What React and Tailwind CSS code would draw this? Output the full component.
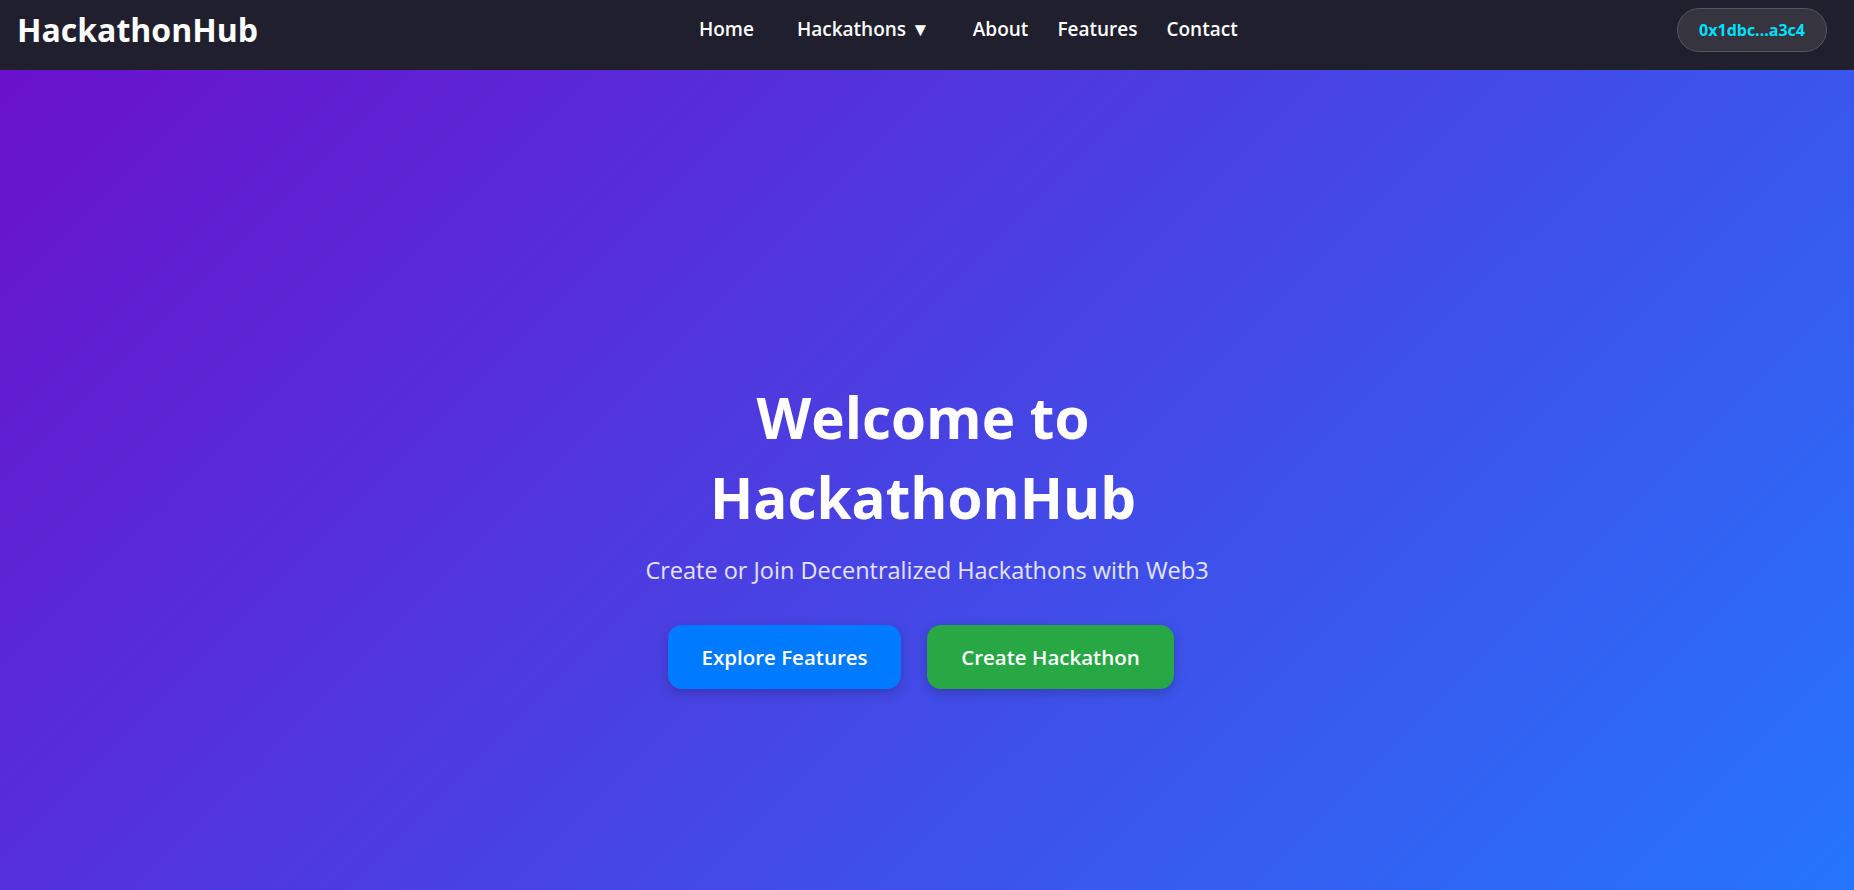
export default function App() {
  return (
    <div className="min-h-screen flex flex-col font-['Open_Sans',sans-serif]">
      {/* Top navigation */}
      <nav className="h-[70px] bg-[#1f1f2e] flex items-center pl-[17px] pr-[27px] pb-[11px] text-white">
        <a href="#" className="text-[32px] font-bold leading-none">
          HackathonHub
        </a>
        <ul className="flex items-center gap-[29px] text-[19px] font-semibold ml-[441px]">
          <li><a href="#">Home</a></li>
          <li className="px-[14px]">
            <button className="font-semibold">Hackathons ▼</button>
          </li>
          <li><a href="#">About</a></li>
          <li><a href="#">Features</a></li>
          <li><a href="#">Contact</a></li>
        </ul>
        <button className="ml-auto h-[44px] px-[21px] rounded-full bg-[#35343f] border border-[#55545f] text-[#00e1ff] text-[16px] font-bold">
          0x1dbc...a3c4
        </button>
      </nav>

      {/* Hero */}
      <section className="flex-1 min-h-[820px] bg-[linear-gradient(135deg,#6a11cb,#2575fc)] flex flex-col items-center pt-[308px] text-white text-center">
        <h1 className="max-w-[600px] mr-[8px] text-[56.6px] leading-[80px] font-bold">
          Welcome to HackathonHub
        </h1>
        <p className="mt-[16px] text-[23.5px] leading-[32px] text-white/85">
          Create or Join Decentralized Hackathons with Web3
        </p>
        <div className="mt-[39px] mr-[12px] flex gap-[26px]">
          <button className="h-[64px] w-[233px] rounded-[14px] bg-[#007bff] text-[20.5px] font-semibold shadow-[0_4px_12px_rgba(0,0,0,0.2)]">
            Explore Features
          </button>
          <button className="h-[64px] w-[247px] rounded-[14px] bg-[#28a745] text-[20.5px] font-semibold shadow-[0_4px_12px_rgba(0,0,0,0.2)]">
            Create Hackathon
          </button>
        </div>
      </section>
    </div>
  );
}
